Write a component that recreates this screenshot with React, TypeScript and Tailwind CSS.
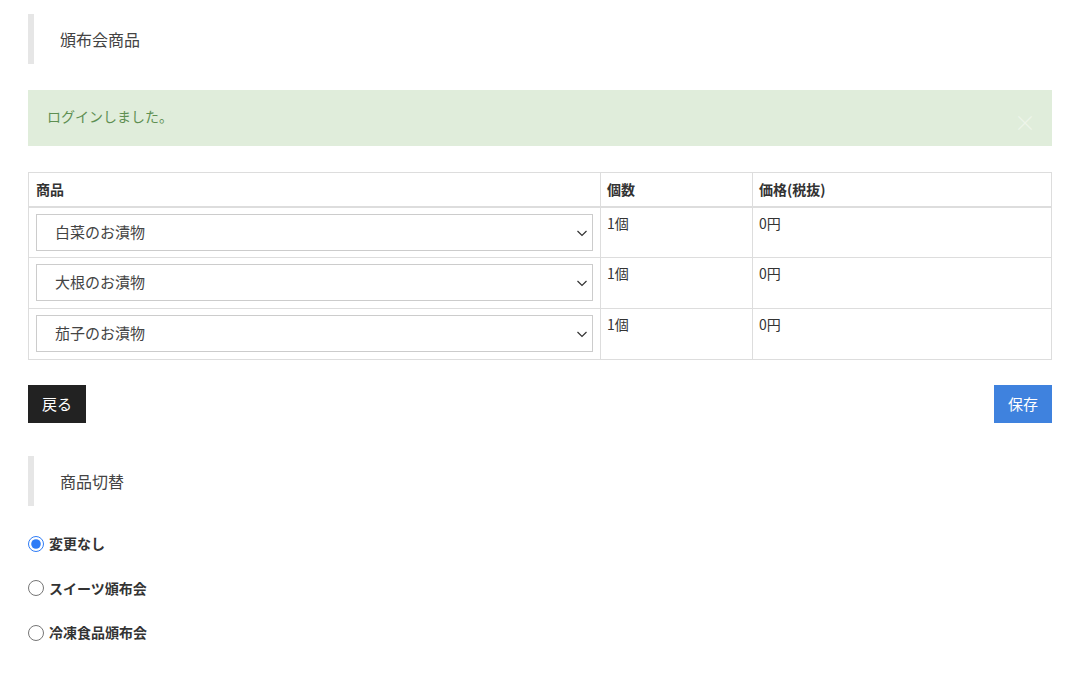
import React from "react";

const rows = ["白菜のお漬物", "大根のお漬物", "茄子のお漬物"];

function Chevron() {
  return (
    <svg width="12" height="12" viewBox="0 0 12 12" className="absolute right-[4px] top-[12px]">
      <path d="M1.5 4 L6 8.5 L10.5 4" fill="none" stroke="#333" strokeWidth="1.2" />
    </svg>
  );
}

function Heading({ children }: { children: React.ReactNode }) {
  return (
    <div className="border-l-[6px] border-[#e6e6e6] h-[50px] flex items-center pl-[26px] text-[16px] text-[#444]">
      {children}
    </div>
  );
}

export default function App() {
  return (
    <div
      className="w-[1080px] h-[692px] bg-white px-[28px] pt-[14px]"
      style={{ fontFamily: '"Noto Sans CJK JP", "Noto Sans", sans-serif' }}
    >
      <Heading>頒布会商品</Heading>

      <div className="mt-[26px] h-[56px] bg-[#e0eddb] relative flex items-start pt-[16px] pl-[19px] text-[14px] text-[#5e8f52]">
        ログインしました。
        <span className="absolute right-[16px] top-[20px] text-[22px] leading-[22px] text-[#eef5ea] font-light">×</span>
      </div>

      <table className="mt-[26px] w-full border-collapse text-[14px] text-[#333]">
        <thead>
          <tr className="h-[34px]">
            <th className="border border-[#ddd] border-b-2 text-left font-bold px-[7px] w-[572px]">商品</th>
            <th className="border border-[#ddd] border-b-2 text-left font-bold px-[6px] w-[152px]">個数</th>
            <th className="border border-[#ddd] border-b-2 text-left font-bold px-[6px]">価格(税抜)</th>
          </tr>
        </thead>
        <tbody>
          {rows.map((r) => (
            <tr key={r} className="h-[51px]">
              <td className="border border-[#ddd] px-[7px] py-[6px] align-top">
                <div className="relative h-[37px] border border-[#ccc] flex items-center pl-[18px] text-[15px] text-[#444]">
                  {r}
                  <Chevron />
                </div>
              </td>
              <td className="border border-[#ddd] px-[6px] pt-[5px] align-top">1個</td>
              <td className="border border-[#ddd] px-[6px] pt-[5px] align-top">0円</td>
            </tr>
          ))}
        </tbody>
      </table>

      <div className="mt-[25px] flex justify-between">
        <button className="h-[38px] w-[58px] bg-[#222] text-white text-[15px]">戻る</button>
        <button className="h-[38px] w-[58px] bg-[#3f82de] text-white text-[15px]">保存</button>
      </div>

      <div className="mt-[33px]">
        <Heading>商品切替</Heading>
      </div>

      <div className="mt-[29px] flex flex-col gap-[27.5px] text-[14px] font-bold text-[#333]">
        {["変更なし", "スイーツ頒布会", "冷凍食品頒布会"].map((l, i) => (
          <label key={l} className="flex items-center h-[17px] gap-[5px]">
            <input type="radio" name="sw" defaultChecked={i === 0} className="m-0 w-[16px] h-[16px] accent-[#2f7cf6]" />
            {l}
          </label>
        ))}
      </div>
    </div>
  );
}
